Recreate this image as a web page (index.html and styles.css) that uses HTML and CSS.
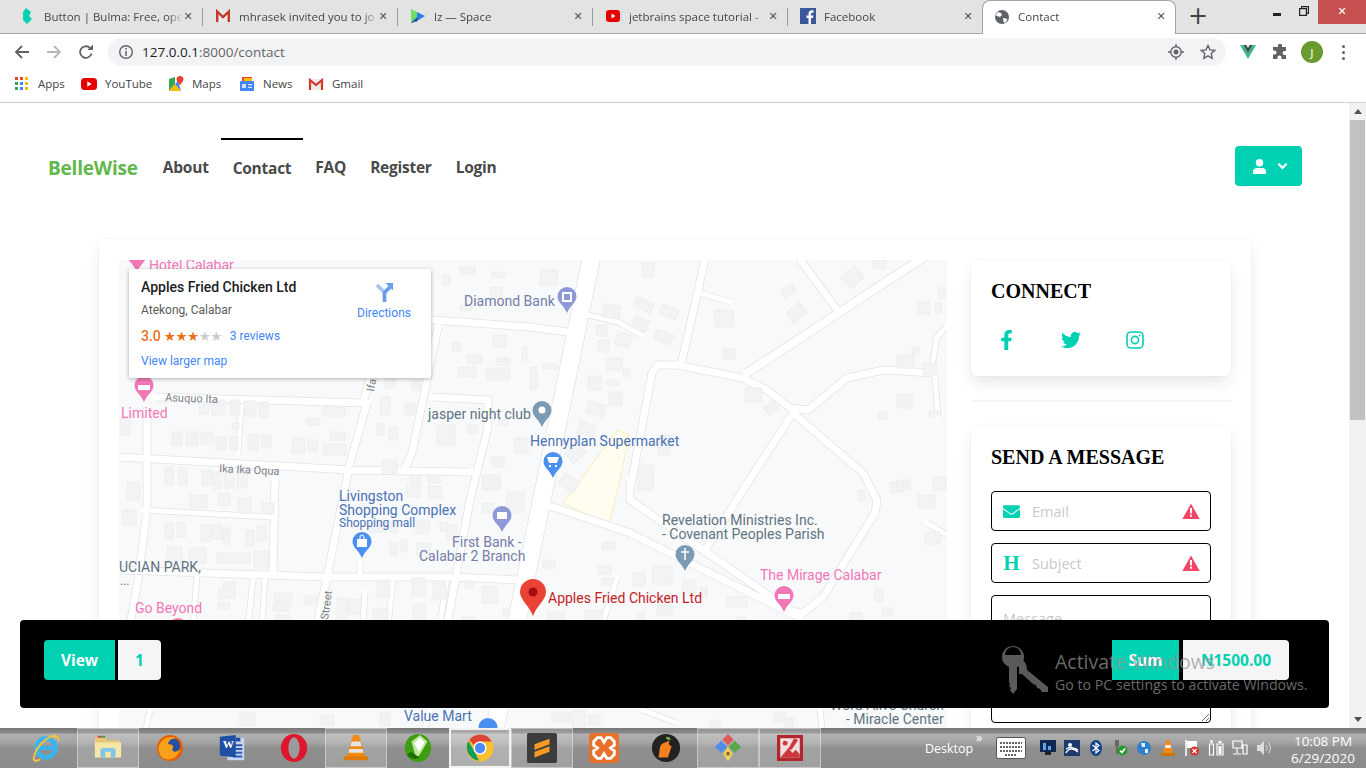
FILE: index.html
```html
<!DOCTYPE html>
<html lang="en">
<head>
<meta charset="utf-8">
<title>Contact</title>
<link rel="stylesheet" href="styles.css">
</head>
<body>
<div class="screen">

<div class="tabstrip">
  <div class="tab"><svg class="fav" viewBox="0 0 16 16"><path fill="#00d1b2" d="M6 0l5 4-2 4 3 3-5 5-4-4V4z"/></svg><span class="tab-title">Button | Bulma: Free, ope</span><span class="tab-x">✕</span></div>
  <div class="tab"><svg class="fav" viewBox="0 0 16 16"><path fill="#e8e8e8" d="M1 2h14v12H1z"/><path fill="none" stroke="#c5382c" stroke-width="2.4" d="M2.2 14V3.5L8 9l5.8-5.5V14"/></svg><span class="tab-title">mhrasek invited you to jo</span><span class="tab-x">✕</span></div>
  <div class="tab"><svg class="fav" viewBox="0 0 16 16"><path fill="#6fdc6a" d="M1 1l6 3v9l-6 2z"/><path fill="#2d7fe8" d="M7 4l8 4-8 5z"/><path fill="#1c55b0" d="M1 15l6-6 1 4z"/></svg><span class="tab-title">lz — Space</span><span class="tab-x">✕</span></div>
  <div class="tab"><svg class="fav" viewBox="0 0 16 16"><rect x="1" y="2" width="14" height="12" rx="3" fill="#e60000"/><path fill="#fff" d="M6.5 5.5l4 2.5-4 2.5z"/></svg><span class="tab-title">jetbrains space tutorial -</span><span class="tab-x">✕</span></div>
  <div class="tab tab-last"><svg class="fav" viewBox="0 0 16 16"><rect width="16" height="16" fill="#3b5998"/><path fill="#fff" d="M11 16v-6h2l.4-2.5H11V6c0-.8.3-1.3 1.3-1.3h1.2V2.400c-.5 0-1.200-.1-1.900-.1C10 2.300 8.500 3.500 8.500 5.700v1.800H6.500V10h2v6z"/></svg><span class="tab-title">Facebook</span><span class="tab-x">✕</span></div>
  <div class="tab tab-active"><svg class="fav" viewBox="0 0 16 16"><circle cx="8" cy="8" r="7" fill="#5f6368"/><path fill="#fff" d="M4 3l3 1 1 2-2 2-3-1-1.500-1zM9 9l3 .5 1.500 1L11 14l-1.500-1z"/></svg><span class="tab-title">Contact</span><span class="tab-x">✕</span></div>
  <span class="tab-new">+</span>
  <div class="winctl">
    <span class="win-min"></span>
    <svg class="win-max" viewBox="0 0 10 10"><path fill="none" stroke="#222" stroke-width="1.200" d="M.6 2.600h6.800v6.800H.6zM2.600 2.600V.6h6.800v6.800H7.400"/></svg>
    <span class="win-close">✕</span>
  </div>
</div>

<div class="toolbar">
  <svg class="nav-ic" viewBox="0 0 16 16"><path fill="none" stroke="#5f6368" stroke-width="1.800" d="M15 8H2M8 2L2 8l6 6"/></svg>
  <svg class="nav-ic" viewBox="0 0 16 16"><path fill="none" stroke="#b5b7ba" stroke-width="1.800" d="M1 8h13M8 2l6 6-6 6"/></svg>
  <svg class="nav-ic" viewBox="0 0 16 16"><path fill="none" stroke="#5f6368" stroke-width="1.800" d="M13.500 9.500A5.800 5.800 0 1 1 12 4"/><path fill="#5f6368" d="M9.500 6H15V.5z"/></svg>
  <div class="address">
    <svg class="addr-ic" viewBox="0 0 16 16"><circle cx="8" cy="8" r="6.300" fill="none" stroke="#5f6368" stroke-width="1.400"/><path stroke="#5f6368" stroke-width="1.500" d="M8 7v5M8 4v1.800"/></svg>
    <span class="url">127.0.0.1<span class="url-path">:8000/contact</span></span>
    <svg class="addr-end" viewBox="0 0 16 16"><circle cx="8" cy="8" r="5.200" fill="none" stroke="#5f6368" stroke-width="1.400"/><circle cx="8" cy="8" r="2.500" fill="#5f6368"/><path stroke="#5f6368" stroke-width="1.400" d="M8 0v3M8 13v3M0 8h3M13 8h3"/></svg>
    <svg class="addr-end" viewBox="0 0 16 16"><path fill="none" stroke="#5f6368" stroke-width="1.400" d="M8 1.500l2 4.400 4.700.5-3.500 3.200 1 4.700L8 11.900l-4.200 2.400 1-4.700L1.300 6.400 6 5.900z"/></svg>
  </div>
  <svg class="ext-vue" viewBox="0 0 16 16"><path fill="#41b883" d="M0 1h3.500L8 9l4.500-8H16L8 15z"/><path fill="#34495e" d="M3.500 1h2.800L8 4l1.700-3h2.800L8 9z"/></svg>
  <svg class="ext-puz" viewBox="0 0 16 16"><path fill="#5f6368" d="M6 1.500a2 2 0 0 1 4 0V3h4v4h-1.500a2 2 0 0 0 0 4H14v4H9.500v-1.500a2 2 0 0 0-4 0V15H1v-4.500h1.500a2 2 0 0 0 0-4H1V3h5z"/></svg>
  <span class="avatar">J</span>
  <span class="kebab"><i></i><i></i><i></i></span>
</div>

<div class="bookmarks">
  <span class="bm bm-apps"><svg class="bm-ic" viewBox="0 0 14 14"><path fill="#ea4335" d="M0 0h3v3H0zM5 0h3v3H5z"/><path fill="#fbbc05" d="M10 0h3v3h-3zM10 5h3v3h-3zM10 10h3v3h-3z"/><path fill="#34a853" d="M0 5h3v3H0zM0 10h3v3H0z"/><path fill="#4285f4" d="M5 5h3v3H5zM5 10h3v3H5z"/></svg>Apps</span>
  <span class="bm bm-yt"><svg class="bm-ic" viewBox="0 0 16 16"><rect y="2" width="16" height="12" rx="3.500" fill="#e60000"/><path fill="#fff" d="M6.300 5.300l4.400 2.700-4.400 2.700z"/></svg>YouTube</span>
  <span class="bm bm-maps"><svg class="bm-ic" viewBox="0 0 16 16"><path fill="#34a853" d="M1 3l6-2v7l-6 7z"/><path fill="#fbbc05" d="M1 15l6-7 6 7z"/><path fill="#4285f4" d="M7 8l3-3 3 10z"/><path fill="#ea4335" d="M12 0a3.500 3.500 0 0 1 3.500 3.500c0 2-2.500 3.500-3.500 6-1-2.500-3.500-4-3.500-6A3.500 3.500 0 0 1 12 0z"/></svg>Maps</span>
  <span class="bm bm-news"><svg class="bm-ic" viewBox="0 0 16 16"><path fill="#e8453c" d="M3 1h10v4H3z"/><path fill="#fbbc05" d="M5 2h8v3H5z"/><rect x="1" y="5" width="14" height="10" rx="1" fill="#4285f4"/><path fill="#cfe0fb" d="M3 8h4v4H3zM9 8h4v1.300H9zM9 10.700h4V12H9z"/></svg>News</span>
  <span class="bm bm-gm"><svg class="bm-ic" viewBox="0 0 16 16"><path fill="#eee" d="M1 3h14v11H1z"/><path fill="none" stroke="#d2382c" stroke-width="2.200" d="M2 14V4l6 5 6-5v10"/></svg>Gmail</span>
</div>

<div class="viewport">
  <div class="page">
    <nav class="navbar">
      <span class="brand">BelleWise</span>
      <a class="nav-link">About</a>
      <a class="nav-link nav-current">Contact</a>
      <a class="nav-link">FAQ</a>
      <a class="nav-link">Register</a>
      <a class="nav-link">Login</a>
      <button class="user-btn">
        <svg class="user-ic" viewBox="0 0 16 16"><circle cx="8" cy="4" r="4" fill="#fff"/><path fill="#fff" d="M1 16v-2.500C1 11 3 9.500 5 9.500h6c2 0 4 1.500 4 4V16z"/></svg>
        <svg class="user-chev" viewBox="0 0 12 8"><path fill="none" stroke="#fff" stroke-width="2.400" d="M1.500 1.500L6 6l4.500-4.500"/></svg>
      </button>
    </nav>

    <main class="box">
      <div class="map">
        <svg class="map-svg" viewBox="119 260 828 468" width="828" height="468">
          <defs>
            <path id="r-s" d="M588 315L618 322L642 335M700 293L730 302M935 377L938 417M932 367L937 337L947 326M617 578L602 625M927 523L950 537M643 710L677 723M820 710L822 728M360 563L360 577M365 593L363 625M241 407L238 453M270 517L143 510M197 577L193 625M253 580L248 625M265 577L262 625M393 580L388 625M447 577L440 625M506 690L498 728M150 710L146 728M430 710L425 728"/>
            <path id="r-m" d="M706 255L681 365M630 490L652 373L658 365L677 365L743 378L767 390L790 408L808 410L847 378L883 370L933 373M797 255L837 310M793 413L743 490L707 547M793 413L863 473L877 500L875 513L823 597L803 613L783 610M630 480L630 500L703 550L790 610M547 505L630 533L800 618M119 457L350 470L470 472M155 397L363 403L370 378M367 403L350 463L327 577L317 625M438 327L412 453L405 468M432 397L488 400L488 427L470 500L447 625M120 570L323 577L450 577L520 580M147 407L147 510L138 580L130 625M275 480L273 573M432 320L530 327L567 332"/>
            <path id="r-l" d="M927 255L747 373"/>
            <path id="r-x" d="M592 255L495 728"/>
            <path id="pin" d="M10 0a9.500 9.500 0 0 1 9.500 9.500c0 6-6.500 9-9.500 16.500C7 18.500.5 15.500.5 9.500A9.500 9.500 0 0 1 10 0z"/>
          </defs>
          <rect x="119" y="260" width="828" height="468" fill="#f8f9fb"/>
          <path fill="#fffcf0" stroke="#fdecb8" d="M617 430L629 435L620 480L609 525L563 503L573 490z"/>
          <g fill="none" stroke="#e1e3e8">
            <use href="#r-s" stroke-width="6.500"/><use href="#r-m" stroke-width="8.500"/><use href="#r-l" stroke-width="9.500"/><use href="#r-x" stroke-width="19"/>
          </g>
          <g fill="none" stroke="#fff" stroke-linecap="round">
            <use href="#r-s" stroke-width="5"/><use href="#r-m" stroke-width="7"/><use href="#r-l" stroke-width="8"/><use href="#r-x" stroke-width="17.500"/>
          </g>
          <path fill="#f2f3f5" stroke="#eceef0" d="M493 335h13v12h-13zM452 343h8v8h-8zM467 355h15v8h-15zM497 358h12v7h-12zM458 367h18v10h-18zM487 368h22v12h-22zM522 347h5v13h-5zM460 267h15v7h-15zM492 272h13v5h-13zM443 275h7v10h-7zM490 287h12v12h-12zM460 305h12v5h-12zM385 378h10v10h-10zM412 380h8v10h-8zM380 397h10v18h-10zM405 403h10v12h-10zM377 423h7v12h-7zM389 427h8v13h-8zM437 425h18v20h-18zM467 425h10v8h-10zM498 420h10v5h-10zM515 438h13v15h-13zM492 457h12v10h-12zM382 460h15v13h-15zM410 475h10v8h-10zM428 475h12v8h-12zM483 475h17v15h-17zM199 402h10v12h-10zM212 400h13v15h-13zM230 400h10v15h-10zM244 401h12v15h-12zM259 402h9v15h-9zM323 407h22v9h-22zM307 418h13v7h-13zM330 432h15v8h-15zM232 423h7v6h-7zM172 432h10v13h-10zM186 432h12v13h-12zM201 432h12v12h-12zM216 437h10v13h-10zM230 437h8v13h-8zM248 434h10v16h-10zM261 435h10v13h-10zM292 438h13v15h-13zM308 440h9v11h-9zM323 444h23v11h-23zM120 418h10v17h-10zM165 467h8v18h-8zM179 468h8v17h-8zM202 470h10v15h-10zM213 472h8v17h-8zM224 473h10v15h-10zM237 473h10v15h-10zM127 482h13v18h-13zM190 495h17v13h-17zM218 493h12v12h-12zM238 498h13v15h-13zM262 503h12v11h-12zM123 510h13v15h-13zM165 523h8v16h-8zM177 522h8v15h-8zM201 525h10v16h-10zM212 524h10v15h-10zM223 528h7v16h-7zM246 530h8v15h-8zM257 526h9v15h-9zM167 547h15v15h-15zM189 548h17v15h-17zM217 553h33v10h-33zM254 551h15v17h-15zM223 582h13v6h-13zM219 590h16v8h-16zM218 603h12v6h-12zM274 593h18v9h-18zM304 596h13v8h-13zM273 604h17v7h-17zM275 615h15v5h-15zM337 598h10v22h-10zM348 599h13v15h-13zM377 580h13v17h-13zM412 578h13v18h-13zM433 581h13v18h-13zM413 604h12v16h-12zM373 608h15v12h-15zM465 581h8v7h-8zM482 586h15v17h-15zM503 609h6v7h-6zM462 617h13v3h-13zM390 542h7v13h-7zM400 540h7v12h-7zM417 543h13v13h-13zM368 520h17v12h-17zM390 522h8v10h-8zM416 520h13v14h-13zM440 522h8v9h-8zM447 525h10v15h-10zM407 485h13v12h-13zM428 486h13v12h-13zM482 503h12v10h-12zM507 492h17v20h-17zM483 480h17v8h-17zM540 270h17v15h-17zM642 263h12v13h-12zM596 325h11v11h-11zM598 340h11v12h-11zM715 310h18v17h-18zM723 349h12v10h-12zM607 358h15v12h-15zM623 369h7v7h-7zM588 376h13v14h-13zM607 380h12v5h-12zM609 392h13v13h-13zM543 364h14v5h-14zM530 367h7v22h-7zM745 388h17v14h-17zM918 302h12v12h-12zM935 303h6v10h-6zM912 347h7v7h-7zM897 355h17v13h-17zM923 363h13v12h-13zM897 394h15v14h-15zM878 412h9v7h-9zM929 411h10v5h-10zM938 288h7v10h-7zM933 477h13v13h-13zM890 482h13v10h-13zM638 465h15v25h-15zM660 435h12v10h-12zM658 447h12v8h-12zM873 260h13v8h-13zM918 495h17v13h-17zM897 480h13v10h-13zM858 490h7v10h-7zM925 532h15v12h-15zM602 542h13v7h-13zM543 560h12v8h-12zM598 566h13v8h-13zM602 578h10v7h-10zM633 573h12v13h-12zM652 566h20v18h-20zM657 605h15v10h-15zM683 580h13v13h-13zM700 587h7v10h-7zM727 597h20v10h-20zM875 588h8v13h-8zM882 608h10v8h-10zM850 613h12v7h-12zM737 617h8v3h-8zM547 612h18v8h-18zM585 610h17v10h-17zM637 612h7v8h-7zM552 712h18v10h-18zM572 710h13v17h-13zM588 715h12v10h-12zM710 720h10v7h-10zM775 712h10v10h-10zM785 718h8v10h-8zM867 718h10v5h-10zM240 712h15v14h-15zM320 715h14v10h-14zM380 712h10v14h-10z"/>
          <g fill="#f2f3f5" stroke="#eceef0">
            <rect x="603" y="305" width="17" height="13" transform="rotate(10 611 311)"/>
            <rect x="635" y="300" width="18" height="10" transform="rotate(22 644 305)"/>
            <rect x="660" y="307" width="18" height="10" transform="rotate(22 669 312)"/>
            <rect x="633" y="318" width="15" height="12" transform="rotate(22 640 324)"/>
            <rect x="616" y="333" width="15" height="13" transform="rotate(15 623 339)"/>
            <rect x="655" y="332" width="17" height="10" transform="rotate(20 663 337)"/>
            <rect x="587" y="403" width="18" height="12" transform="rotate(15 596 409)"/>
            <rect x="578" y="423" width="17" height="12" transform="rotate(15 586 429)"/>
            <rect x="782" y="287" width="13" height="8" transform="rotate(-28 788 291)"/>
            <rect x="788" y="307" width="17" height="13" transform="rotate(-38 796 313)"/>
            <rect x="843" y="270" width="18" height="15" transform="rotate(-40 852 277)"/>
            <rect x="567" y="447" width="17" height="13" transform="rotate(-40 575 453)"/>
            <rect x="560" y="477" width="18" height="12" transform="rotate(30 569 483)"/>
            <rect x="765" y="403" width="12" height="10" transform="rotate(-38 771 408)"/>
          </g>

          <use href="#pin" x="127" y="246" fill="#f277b5"/>
          <use href="#pin" x="134" y="376" fill="#f277b5"/><path fill="#fff" d="M138 385h12v5h-12z"/>
          <use href="#pin" x="557" y="287" fill="#8e99d8"/><rect x="562" y="292" width="10" height="10" fill="#fff"/><rect x="564" y="294" width="6" height="6" fill="#8e99d8"/>
          <use href="#pin" x="532" y="401" fill="#7d9bb2"/><circle cx="542" cy="410" r="3.500" fill="#fff"/>
          <use href="#pin" x="543" y="452" fill="#4b8ff0"/><path fill="#fff" d="M547 457h12l-2 6h-8zM549 465h2v2h-2zM555 465h2v2h-2z"/>
          <use href="#pin" x="492" y="506" fill="#8e99d8"/><rect x="497" y="512" width="10" height="7" fill="#fff"/>
          <use href="#pin" x="352" y="532" fill="#4b8ff0"/><path fill="#fff" d="M357 539h10v8h-10z"/><path fill="none" stroke="#fff" d="M360 539v-2a2 2 0 0 1 4 0v2"/>
          <use href="#pin" x="675" y="545" fill="#7d9bb2"/><path stroke="#fff" stroke-width="1.500" d="M685 548v12M681 552h8"/>
          <use href="#pin" x="774" y="586" fill="#f277b5"/><path fill="#fff" d="M778 594h12v5h-12z"/>
          <use href="#pin" x="168" y="618" fill="#f277b5"/>
          <use href="#pin" x="478" y="718" fill="#4b8ff0"/>
          <path fill="#ea4335" d="M533 579a13 13 0 0 1 13 13c0 8-9 13-13 24-4-11-13-16-13-24a13 13 0 0 1 13-13z"/><circle cx="533" cy="592" r="4.500" fill="#a50e0e"/>

          <g class="lb">
            <text class="lb-pink" x="149" y="270">Hotel Calabar</text>
            <text class="lb-pink" x="121" y="418">Limited</text>
            <text class="lb-road" x="165" y="401" transform="rotate(2 165 401)">Asuquo Ita</text>
            <text class="lb-road" x="219" y="472" transform="rotate(3 219 472)">Ika Ika Oqua</text>
            <text class="lb-road" x="374" y="392" transform="rotate(-80 374 392)">Ifa</text>
            <text class="lb-road" x="328" y="620" transform="rotate(-82 328 620)">Street</text>
            <text class="lb-bank" x="464" y="306">Diamond Bank</text>
            <text class="lb-grey" x="428" y="419">jasper night club</text>
            <text class="lb-blue" x="530" y="446">Hennyplan Supermarket</text>
            <text class="lb-blue" x="339" y="501">Livingston</text>
            <text class="lb-blue" x="339" y="515">Shopping Complex</text>
            <text class="lb-blue lb-sm" x="339" y="527">Shopping mall</text>
            <text class="lb-bank" x="452" y="547">First Bank -</text>
            <text class="lb-bank" x="419" y="561">Calabar 2 Branch</text>
            <text class="lb-grey" x="119" y="572">UCIAN PARK,</text>
            <text class="lb-grey lb-sm" x="120" y="585">...</text>
            <text class="lb-pink" x="135" y="613">Go Beyond</text>
            <text class="lb-red" x="548" y="603">Apples Fried Chicken Ltd</text>
            <text class="lb-grey" x="662" y="525">Revelation Ministries Inc.</text>
            <text class="lb-grey" x="662" y="539">- Covenant Peoples Parish</text>
            <text class="lb-pink" x="760" y="580">The Mirage Calabar</text>
            <text class="lb-blue" x="404" y="721">Value Mart</text>
            <text class="lb-grey" x="830" y="710">Word Alive Church</text>
            <text class="lb-grey" x="846" y="724">- Miracle Center</text>
          </g>
        </svg>
        <div class="info">
          <div class="info-main">
            <div class="info-title">Apples Fried Chicken Ltd</div>
            <div class="info-addr">Atekong, Calabar</div>
            <div class="info-rate"><span class="rate-num">3.0</span><span class="stars">★★★<span class="stars-off">★★</span></span><span class="rate-rev">3 reviews</span></div>
            <div class="info-link">View larger map</div>
          </div>
          <div class="info-dir">
            <svg class="dir-ic" viewBox="0 0 20 20"><path fill="none" stroke="#a8c7f0" stroke-width="4" d="M2 2l8 8"/><path fill="none" stroke="#6a9fe8" stroke-width="4" d="M10 20V10l6-6"/><path fill="#6a9fe8" d="M11 0h8v8z"/></svg>
            <span>Directions</span>
          </div>
        </div>
      </div>

      <aside class="side">
        <section class="card card-connect">
          <h2 class="card-title">CONNECT</h2>
          <div class="socials">
            <svg class="soc soc-f" viewBox="0 0 320 512"><path d="M279.140 288l14.220-92.660h-88.910v-60.130c0-25.350 12.420-50.060 52.240-50.060h40.420V6.260S260.430 0 225.360 0c-73.220 0-121.080 44.380-121.080 124.720v70.620H22.890V288h81.390v224h100.170V288z"/></svg>
            <svg class="soc soc-t" viewBox="0 0 512 512"><path d="M459.370 151.716c.325 4.548.325 9.097.325 13.645 0 138.720-105.583 298.558-298.558 298.558-59.452 0-114.680-17.219-161.137-47.106 8.447.974 16.568 1.299 25.340 1.299 49.055 0 94.213-16.568 130.274-44.832-46.132-.975-84.792-31.188-98.112-72.772 6.498.974 12.995 1.624 19.818 1.624 9.421 0 18.843-1.300 27.614-3.573-48.081-9.747-84.143-51.980-84.143-102.985v-1.299c13.969 7.797 30.214 12.670 47.431 13.319-28.264-18.843-46.781-51.005-46.781-87.391 0-19.492 5.197-37.360 14.294-52.954 51.655 63.675 129.300 105.258 216.365 109.807-1.624-7.797-2.599-15.918-2.599-24.040 0-57.828 46.782-104.934 104.934-104.934 30.213 0 57.502 12.670 76.670 33.137 23.715-4.548 46.456-13.320 66.599-25.340-7.798 24.366-24.366 44.833-46.132 57.827 21.117-2.273 41.584-8.122 60.426-16.243-14.292 20.791-32.161 39.308-52.628 54.253z"/></svg>
            <svg class="soc-i" viewBox="0 0 18 18"><rect x="1" y="1" width="16" height="16" rx="4" fill="none" stroke="#00d1b2" stroke-width="1.600"/><circle cx="9" cy="9" r="3.600" fill="none" stroke="#00d1b2" stroke-width="1.600"/><circle cx="13.500" cy="4.500" r="1" fill="#00d1b2"/></svg>
          </div>
        </section>
        <hr class="rule">
        <section class="card card-send">
          <h2 class="card-title">SEND A MESSAGE</h2>
          <label class="field">
            <svg class="field-ic" viewBox="0 0 512 512"><path fill="#00d1b2" d="M502.300 190.800c3.900-3.100 9.700-.2 9.700 4.700V400c0 26.500-21.500 48-48 48H48c-26.500 0-48-21.500-48-48V195.600c0-5 5.700-7.800 9.700-4.700 22.400 17.400 52.100 39.500 154.100 113.600 21.100 15.400 56.700 47.800 92.200 47.600 35.700.3 72-32.800 92.300-47.600 102-74.100 131.600-96.300 154-113.700zM256 320c23.200.4 56.600-29.200 73.400-41.400 132.700-96.300 142.800-104.700 173.400-128.700 5.800-4.500 9.200-11.500 9.200-18.900v-19c0-26.500-21.500-48-48-48H48C21.500 64 0 85.500 0 112v19c0 7.400 3.400 14.300 9.200 18.900 30.600 23.900 40.700 32.400 173.400 128.700 16.800 12.200 50.200 41.800 73.400 41.400z"/></svg>
            <input class="field-input" type="text" placeholder="Email">
            <svg class="field-alert" viewBox="0 0 18 16"><path fill="#f14668" d="M9 .5l8.700 15.500H.3z"/><path fill="#fff" d="M8 5h2v5.500H8zM8 11.800h2v2H8z"/></svg>
          </label>
          <label class="field">
            <span class="field-h">H</span>
            <input class="field-input" type="text" placeholder="Subject">
            <svg class="field-alert" viewBox="0 0 18 16"><path fill="#f14668" d="M9 .5l8.700 15.500H.3z"/><path fill="#fff" d="M8 5h2v5.500H8zM8 11.800h2v2H8z"/></svg>
          </label>
          <textarea class="field-area" placeholder="Message"></textarea>
        </section>
      </aside>
    </main>
  </div>
  <div class="scrollbar">
    <span class="sb-up"></span>
    <span class="sb-thumb"></span>
    <span class="sb-down"></span>
  </div>
</div>

<div class="taskbar">
  <div class="tasks">
    <span class="slot"><svg class="tk" viewBox="0 0 32 32"><circle cx="16" cy="16" r="10" fill="none" stroke="#3ab4ef" stroke-width="5"/><path fill="#3ab4ef" d="M8 14h17v4H8z"/><path fill="none" stroke="#f5c33b" stroke-width="2" d="M27 3C20 2 6 12 3 26c-1 5 4 4 7 2M24 5c4-2 6 0 5 3"/></svg></span>
    <span class="slot slot-on"><svg class="tk" viewBox="0 0 32 32"><path fill="#e7c774" d="M2 5h12l2 3h12v18H2z"/><path fill="#f7e6a9" d="M2 10h28v16H2z"/><path fill="#7ec6ea" d="M8 26v-7a3 3 0 0 1 3-3h10a3 3 0 0 1 3 3v7h-5v-6h-6v6z"/><path fill="#d8443a" d="M5 3h4v2H5z"/><path fill="#3ea04f" d="M9 3h4v2H9z"/></svg></span>
    <span class="slot"><svg class="tk" viewBox="0 0 32 32"><circle cx="16" cy="16" r="14" fill="#e66000"/><circle cx="18" cy="14" r="9" fill="#2a4f9e"/><path fill="#f7a11a" d="M4 14c3-9 13-12 19-8-6-1-9 3-9 6 5 0 6 2 5 4-2 5 4 5 8 1-2 8-9 12-15 11C6 27 3 20 4 14z"/></svg></span>
    <span class="slot"><svg class="tk" viewBox="0 0 32 32"><path fill="#c6d6ee" d="M11 5h18v24H11z"/><path stroke="#2a5db0" stroke-width="2" d="M18 13h9M18 17h9M18 21h9M18 25h9"/><path fill="#1e4fa3" d="M3 4l17-2v24L3 24z"/><path fill="#1e4fa3" d="M20 5h5v4h-5z"/><text class="tk-w" x="6" y="16">W</text></svg></span>
    <span class="slot"><svg class="tk" viewBox="0 0 32 32"><ellipse cx="16" cy="16" rx="14" ry="15" fill="#e0172c"/><ellipse cx="16" cy="16" rx="6" ry="11.500" fill="#9a9a9a"/></svg></span>
    <span class="slot slot-on"><svg class="tk" viewBox="0 0 32 32"><path fill="#f08a10" d="M13 2h6l7 24H6z"/><path fill="#e4e4e4" d="M11.500 9h9l1.500 5H10zM9 17h14l1 4H8z"/><path fill="#e07a08" d="M3 25h26v4H3z"/></svg></span>
    <span class="slot"><svg class="tk" viewBox="0 0 32 32"><ellipse cx="16" cy="16" rx="14" ry="15" fill="#3f9d12"/><path fill="#bfe89a" d="M9 9l9-7 8 7-8 14-4 4z"/><path fill="#fff" d="M12 11l6-6 5 5-6 10z"/><path fill="#1c6b06" d="M4 24l8 4 6-2-10-6z"/></svg></span>
    <span class="slot slot-act"><svg class="tk" viewBox="0 0 32 32"><circle cx="16" cy="16" r="14.500" fill="#fbc02d"/><path fill="#db4437" d="M16 1.500A14.500 14.500 0 0 1 28.600 9H16a7 7 0 0 0-6.300 4L4.500 7.500A14.500 14.500 0 0 1 16 1.500z"/><path fill="#0f9d58" d="M3.500 8.500l6.500 11 5 10A14.500 14.500 0 0 1 3.500 8.500z"/><circle cx="16" cy="16" r="7" fill="#fff"/><circle cx="16" cy="16" r="5.500" fill="#4c8bf5"/></svg></span>
    <span class="slot slot-on"><svg class="tk" viewBox="0 0 32 32"><rect width="32" height="32" rx="2" fill="#3c3c3c"/><path fill="#f59a23" d="M8 12l16-6v6L8 18zM24 14v6L8 26v-6l8-3z"/></svg></span>
    <span class="slot"><svg class="tk" viewBox="0 0 32 32"><rect width="32" height="32" rx="4" fill="#e9702b"/><path fill="none" stroke="#fff" stroke-width="3" d="M9 5h4l3 5 3-5h4l4 4v4l-4 3 4 3v4l-4 4h-4l-3-5-3 5H9l-4-4v-4l4-3-4-3V9z"/></svg></span>
    <span class="slot"><svg class="tk" viewBox="0 0 32 32"><circle cx="16" cy="16" r="15" fill="#222"/><path fill="#f4801f" d="M8 26c2-8 0-12 5-15l7-3c-2 3-1 5 2 6l-4 12z"/><path fill="#79b33e" d="M16 4c3 0 5 1 5 3-3 1-5 0-5-3z"/></svg></span>
    <span class="slot slot-on"><svg class="tk" viewBox="0 0 32 32"><path fill="#e05a5a" d="M16 1l6 6-6 6-6-6z"/><path fill="#5ba84a" d="M23 8l7 7-7 6-6-6z"/><path fill="#4f8fe8" d="M9 8l6 7-6 6-7-6z"/><path fill="#f2d35e" d="M16 15l5 7-5 8-5-8z"/><circle cx="16" cy="22" r="2" fill="#8c6d1f"/></svg></span>
    <span class="slot slot-on"><svg class="tk tk-sm" viewBox="0 0 32 32"><rect width="32" height="32" fill="#b3262b"/><rect x="4" y="4" width="24" height="24" fill="#f2dede"/><path fill="#c8383c" d="M4 28l10-12 5 6 4-4 5 6v4zM21 4l5 2-8 12-4-1z"/><circle cx="10" cy="10" r="3" fill="#c8383c"/></svg></span>
  </div>
  <span class="desktop">Desktop</span>
  <span class="chev">»</span>
  <svg class="kbd" viewBox="0 0 30 22"><rect x=".5" y=".5" width="29" height="21" rx="2" fill="#fff" stroke="#555"/><path stroke="#333" stroke-width="1.500" stroke-dasharray="2 1" d="M4 6h22M4 10h22M4 14h22M9 18h12"/></svg>
  <div class="tray">
    <svg class="ti" viewBox="0 0 16 16"><rect width="16" height="12" fill="#10284f"/><path fill="#5aa9e6" d="M3 3h3v7H3zM8 6h3v4H8z"/><path fill="#222" d="M5 12h6v3H5z"/></svg>
    <svg class="ti" viewBox="0 0 16 16"><rect width="16" height="16" fill="#1c3a6e"/><circle cx="6" cy="5" r="2" fill="#fff"/><path fill="none" stroke="#fff" stroke-width="1.500" d="M2 13c2-5 8-5 12-1M2 9c3-2 8-2 12 1"/></svg>
    <svg class="ti" viewBox="0 0 16 16"><ellipse cx="8" cy="8" rx="6" ry="8" fill="#14408c"/><path fill="none" stroke="#fff" stroke-width="1.200" d="M4.500 5L11 10.500 8 13V3l3 2.500L4.500 11"/></svg>
    <svg class="ti" viewBox="0 0 16 16"><path fill="#666" d="M3 0h4v6H3zM4 6h2v8H4z"/><circle cx="10.500" cy="10.500" r="5" fill="#2b9a2b"/><path fill="none" stroke="#fff" stroke-width="1.500" d="M8 10.500l2 2 3-4"/></svg>
    <svg class="ti" viewBox="0 0 16 16"><circle cx="8" cy="8" r="7" fill="#2f7fd1"/><path fill="#dff0ff" d="M5 3h4v4H6zM9 9h3v4H9z"/></svg>
    <svg class="ti" viewBox="0 0 16 16"><path fill="#f08a10" d="M6.500 0h3l3.500 13H3z"/><path fill="#eee" d="M5.500 5h5l.7 3H4.800z"/><path fill="#d0720a" d="M1 13h14v3H1z"/></svg>
    <svg class="ti" viewBox="0 0 16 16"><path stroke="#fff" stroke-width="1.500" d="M2 0v16"/><path fill="#fff" d="M3 1h10v7H3z"/><circle cx="10.500" cy="11" r="4.500" fill="#d8342c"/><path stroke="#fff" stroke-width="1.300" d="M8.500 9l4 4M12.500 9l-4 4"/></svg>
    <svg class="ti" viewBox="0 0 16 16"><path fill="none" stroke="#fff" stroke-width="1.200" d="M1.500 4h4v11h-4zM9 4h6v11H9z"/><path fill="#fff" d="M2.500 0h2v3h-2zM10.500 1h3v2h-3zM10.500 6h3v8h-3z"/></svg>
    <svg class="ti" viewBox="0 0 16 16"><path fill="none" stroke="#fff" stroke-width="1.200" d="M1 1h9v7H1zM5 8v5M1 14h8M11 5h4v9h-4z"/></svg>
    <svg class="ti" viewBox="0 0 16 16"><path fill="#ddd" d="M1 5h3l4-4v14l-4-4H1z"/><path fill="none" stroke="#ddd" d="M10 5c1.500 2 1.500 4 0 6M12.500 3c2.500 3 2.500 7 0 10"/></svg>
  </div>
  <div class="clock"><span>10:08 PM</span><span>6/29/2020</span></div>
</div>

<div class="cartbar">
  <div class="addons">
    <span class="addon-btn addon-view">View</span>
    <span class="addon-val addon-one">1</span>
  </div>
  <div class="addons addons-end">
    <span class="addon-btn addon-sum">Sum</span>
    <span class="addon-val addon-total">N1500.00</span>
  </div>
</div>

<div class="watermark">
  <svg class="wm-key" viewBox="0 0 46 50"><path fill="#5a5a5a" d="M11 1a11 11 0 0 1 11 11c0 5-3 9-7 10v22l-4 5-3-4 1-2-2-2 1-2-1-2V22C3 20 0 17 0 12A11 11 0 0 1 11 1z"/><path fill="#000" d="M3 10a8 8 0 0 1 16 0z"/><path fill="#5a5a5a" d="M18 13a13 13 0 0 1 7 12l21 17v5h-6l-2-3-3-1-1-3-3-1-11-10-3 0V13z"/></svg>
  <div class="wm-text">
    <span class="wm-big">Activate Windows</span>
    <span class="wm-small">Go to PC settings to activate Windows.</span>
  </div>
</div>

</div>
</body>
</html>
```
FILE: styles.css
```css
* { box-sizing: border-box; }
html, body { margin: 0; padding: 0; height: 100%; overflow: hidden; }
body { font-family: "Open Sans", "Noto Sans", sans-serif; color: #333; background: #fff; }
.screen { position: relative; width: 1366px; height: 768px; display: flex; flex-direction: column; overflow: hidden; }

/* tab strip */
.tabstrip { height: 34px; flex: none; display: flex; padding-left: 8px; background: #e3e3e3; border-bottom: 1px solid #a4a4a4; position: relative; }
.tab { width: 195px; height: 34px; display: flex; align-items: center; padding: 0 8px 2px 12px; font-size: 11.500px; color: #454545; position: relative; }
.tab::after { content: ""; position: absolute; right: 0; top: 8px; height: 18px; width: 1px; background: #9a9a9a; }
.tab-last::after, .tab-active::after { display: none; }
.tab-active { width: 194px; background: #fff; height: 34px; border: 1px solid #a4a4a4; border-bottom: 0; border-radius: 8px 8px 0 0; z-index: 1; margin-left: -1px; padding-left: 11px; padding-right: 7px; }
.fav { width: 16px; height: 16px; flex: none; margin-right: 8px; }
.tab-title { flex: 1; min-width: 0; white-space: nowrap; overflow: hidden; -webkit-mask-image: linear-gradient(90deg, #000 90%, rgba(0,0,0,.15)); mask-image: linear-gradient(90deg, #000 90%, rgba(0,0,0,.15)); }
.tab-x { width: 14px; flex: none; font-size: 11px; font-weight: 700; color: #555; text-align: center; font-family: "DejaVu Sans", sans-serif; }
.tab-new { width: 44px; text-align: center; font-size: 24px; line-height: 32px; color: #444; font-family: "DejaVu Sans", sans-serif; }
.winctl { margin-left: auto; display: flex; align-items: flex-start; height: 24px; }
.win-min { width: 8px; height: 3px; background: #222; margin: 13px 0 0 0; }
.win-max { width: 10px; height: 10px; margin: 6px 9px 0 18px; }
.win-close { width: 48px; height: 24px; background: #c75050; color: #fff; font-size: 11px; text-align: center; line-height: 24px; font-family: "DejaVu Sans", sans-serif; }

/* toolbar */
.toolbar { height: 36px; flex: none; display: flex; align-items: center; padding-left: 14px; background: #fff; }
.nav-ic { width: 16px; height: 16px; margin-right: 16px; flex: none; }
.address { width: 1118px; height: 28px; margin-left: -2px; border-radius: 14px; background: #f1f3f4; display: flex; align-items: center; padding: 0 10px 0 10px; }
.addr-ic { width: 16px; height: 16px; margin-right: 8px; }
.url { flex: 1; font-size: 13.500px; color: #222; }
.url-path { color: #666; }
.addr-end { width: 16px; height: 16px; margin-left: 16px; }
.ext-vue { width: 16px; height: 16px; margin-left: 14px; }
.ext-puz { width: 16px; height: 16px; margin-left: 16px; }
.avatar { width: 22px; height: 22px; border-radius: 50%; background: #6a9b2f; color: #e8f2d8; font-size: 11px; font-weight: 600; display: flex; align-items: center; justify-content: center; margin-left: 13px; }
.kebab { display: flex; flex-direction: column; gap: 3px; margin-left: 19px; }
.kebab i { width: 3px; height: 3px; background: #5f6368; border-radius: 50%; }

/* bookmarks */
.bookmarks { height: 33px; flex: none; display: flex; align-items: center; padding: 0 0 5px 15px; background: #fff; border-bottom: 1px solid #cfcfcf; font-size: 11.500px; color: #444; }
.bm { display: flex; align-items: center; }
.bm-ic { width: 16px; height: 16px; margin-right: 8px; flex: none; }
.bm-apps .bm-ic { width: 14px; height: 14px; margin-right: 9px; }
.bm-apps { width: 66px; }
.bm-yt { width: 87px; }
.bm-maps { width: 71px; }
.bm-news { width: 69px; }

/* page */
.viewport { flex: 1; min-height: 0; display: flex; overflow: hidden; }
.page { flex: 1; min-width: 0; background: #fff; overflow: hidden; padding-top: 35px; }
.navbar { height: 58px; display: flex; align-items: stretch; padding: 0 47px 0 48px; }
.brand { font-size: 19px; font-weight: 700; color: #62b84a; align-self: center; margin: 2px 13px 0 0; letter-spacing: -.2px; }
.nav-link { padding: 0 12px 1px; font-size: 15.500px; font-weight: 700; color: #4a4a4a; display: flex; align-items: center; letter-spacing: -.25px; }
.nav-current { border-top: 2px solid #000; padding-bottom: 0; }
.user-btn { margin: 8px 0 0 auto; width: 67px; height: 40px; border: 0; border-radius: 4px; background: #00d1b2; display: flex; align-items: center; justify-content: center; gap: 10px; padding: 0 0 0 3px; }
.user-ic { width: 15px; height: 15px; }
.user-chev { width: 11px; height: 8px; }
.box { margin: 43px 98px 0 99px; padding: 20px 20px 0; display: flex; gap: 24px; border-radius: 6px; box-shadow: 0 .5em 1em -.125em rgba(10,10,10,.1), 0 0 0 1px rgba(10,10,10,.02); height: 600px; background: #fff; }
.map { width: 828px; height: 469px; flex: none; position: relative; overflow: hidden; }
.map-svg { display: block; margin-top: 1px; }
.lb text { font-family: Roboto, sans-serif; font-size: 14px; }
.lb .lb-pink { fill: #f277b5; }
.lb .lb-road { fill: #7b7f85; font-size: 11px; }
.lb .lb-bank { fill: #7480a8; }
.lb .lb-grey { fill: #5f7480; }
.lb .lb-blue { fill: #4a72b4; }
.lb .lb-sm { font-size: 12px; }
.lb .lb-red { fill: #c5221f; }
.info { position: absolute; left: 10px; top: 10px; width: 302px; height: 109px; background: #fff; border-radius: 2px; box-shadow: 0 1px 4px rgba(0,0,0,.3); padding: 9px 12px; display: flex; font-family: Roboto, sans-serif; }
.info-main { flex: 1; }
.info-title { font-size: 14px; font-weight: 500; color: #202124; line-height: 18px; }
.info-addr { font-size: 12px; color: #5b5b5b; line-height: 16px; margin-top: 6px; }
.info-rate { display: flex; align-items: center; height: 20px; margin-top: 8px; font-size: 12px; }
.rate-num { font-size: 14px; font-weight: 500; color: #e7711b; margin-right: 3px; }
.stars { color: #e7711b; font-size: 13.500px; width: 66px; letter-spacing: -.5px; font-family: "DejaVu Sans", sans-serif; }
.stars-off { color: #ccc; }
.rate-rev { color: #4285f4; }
.info-link { font-size: 12px; color: #4285f4; margin-top: 7px; line-height: 16px; }
.info-dir { width: 56px; margin: 5px 7px 0 0; display: flex; flex-direction: column; align-items: center; font-size: 12px; color: #4285f4; gap: 4px; }
.dir-ic { width: 19px; height: 19px; }

/* side */
.side { width: 260px; flex: none; padding-top: 1px; }
.card { background: #fff; border-radius: 6px; box-shadow: 0 .5em 1em -.125em rgba(10,10,10,.1), 0 0 0 1px rgba(10,10,10,.02); padding: 19px 20px; }
.card-connect { height: 116px; }
.card-title { margin: 0; font-family: "Liberation Serif", serif; font-size: 20px; font-weight: 700; color: #000; line-height: 24px; }
.socials { display: flex; align-items: center; margin-top: 23px; height: 28px; padding-left: 9px; }
.soc { fill: #00d1b2; height: 20px; flex: none; }
.soc-f { width: 13px; }
.soc-t { width: 22px; margin-left: 47px; }
.soc-i { width: 18px; height: 18px; margin-left: 44px; flex: none; }
.rule { border: 0; height: 2px; background: #f5f5f5; margin: 24px 0; }
.card-send { height: 400px; }
.card-send .card-title { margin-bottom: 22px; }
.field { display: flex; align-items: center; height: 40px; border: 1px solid #000; border-radius: 4px; margin-bottom: 12px; padding: 0 11px; background: #fff; }
.field-ic { width: 17px; height: 17px; flex: none; }
.field-h { width: 17px; flex: none; font-family: "Liberation Serif", serif; font-size: 21px; font-weight: 700; color: #00d1b2; line-height: 1; text-align: center; }
.field-input { flex: 1; min-width: 0; width: 100%; border: 0; outline: 0; background: transparent; padding: 0 0 0 12px; font-family: "Open Sans", sans-serif; font-size: 14.500px; }
.field-input::placeholder, .field-area::placeholder { color: #c9c9c9; }
.field-alert { width: 18px; height: 16px; flex: none; margin-right: -1px; }
.field-area { display: block; width: 220px; height: 128px; border: 1px solid #000; border-radius: 4px; padding: 13px 11px; font-family: "Open Sans", sans-serif; font-size: 14.500px; outline: 0; }

.scrollbar { width: 17px; flex: none; background: #f1f1f1; display: flex; flex-direction: column; align-items: center; position: relative; }
.sb-up { width: 0; height: 0; margin-top: 6px; border: 4px solid transparent; border-top: 0; border-bottom: 5px solid #505050; }
.sb-thumb { width: 15px; height: 300px; background: #c1c1c1; margin-top: 6px; }
.sb-down { width: 0; height: 0; margin-top: auto; margin-bottom: 6px; border: 4px solid transparent; border-bottom: 0; border-top: 5px solid #505050; }

/* taskbar */
.taskbar { height: 40px; flex: none; display: flex; align-items: center; padding-left: 15px; color: #fff; background: linear-gradient(#777 0, #8a8a8a 5px, #b0b0b0 6px, #a6a6a6 14px, #8f8f8f 20px, #8b8b8b 100%); }
.tasks { display: flex; height: 40px; }
.slot { width: 62px; height: 40px; display: flex; align-items: center; justify-content: center; border: 1px solid transparent; }
.slot-on { border-color: rgba(255,255,255,.4); background: rgba(255,255,255,.18); }
.slot-act { border-color: #f2f2f2; border-width: 2px; background: rgba(255,255,255,.3); }
.tk { width: 30px; height: 30px; }
.tk-sm { width: 26px; height: 26px; }
.tk-w { font-family: "Liberation Serif", serif; font-size: 12px; font-weight: 700; fill: #fff; }
.desktop { font-size: 12.500px; margin-left: 104px; width: 46px; }
.chev { font-size: 13px; margin: -22px 0 0 5px; width: 20px; line-height: 1; }
.kbd { width: 30px; height: 22px; flex: none; }
.tray { display: flex; align-items: center; margin-left: 14px; gap: 8px; }
.ti { width: 16px; height: 16px; flex: none; }
.clock { display: flex; flex-direction: column; align-items: center; font-size: 13.500px; line-height: 17px; padding-top: 3px; margin-left: 23px; width: 56px; white-space: nowrap; }

/* floating bar */
.cartbar { position: absolute; left: 20px; top: 620px; width: 1309px; height: 88px; background: #000; border-radius: 4px; display: flex; align-items: flex-start; justify-content: space-between; padding: 20px 40px 0 24px; }
.addons { display: flex; gap: 3px; }
.addons-end { gap: 4px; }
.addon-btn, .addon-val { height: 40px; display: flex; align-items: center; justify-content: center; font-size: 15.500px; font-weight: 700; }
.addon-btn { background: #00d1b2; color: #fff; border-radius: 4px 0 0 4px; }
.addon-val { background: #f5f5f5; color: #00d1b2; border-radius: 0 4px 4px 0; }
.addon-view { width: 71px; }
.addon-one { width: 43px; }
.addon-sum { width: 67px; border-radius: 0; }
.addon-total { width: 106px; }

/* activation watermark */
.watermark { position: absolute; left: 1002px; top: 645px; display: flex; pointer-events: none; }
.wm-key { width: 46px; height: 50px; margin-right: 7px; }
.wm-text { display: flex; flex-direction: column; color: rgba(150,150,150,.72); margin-top: 4px; }
.wm-big { font-size: 19.500px; line-height: 26px; white-space: nowrap; }
.wm-small { font-size: 14.200px; line-height: 19px; white-space: nowrap; }
```
